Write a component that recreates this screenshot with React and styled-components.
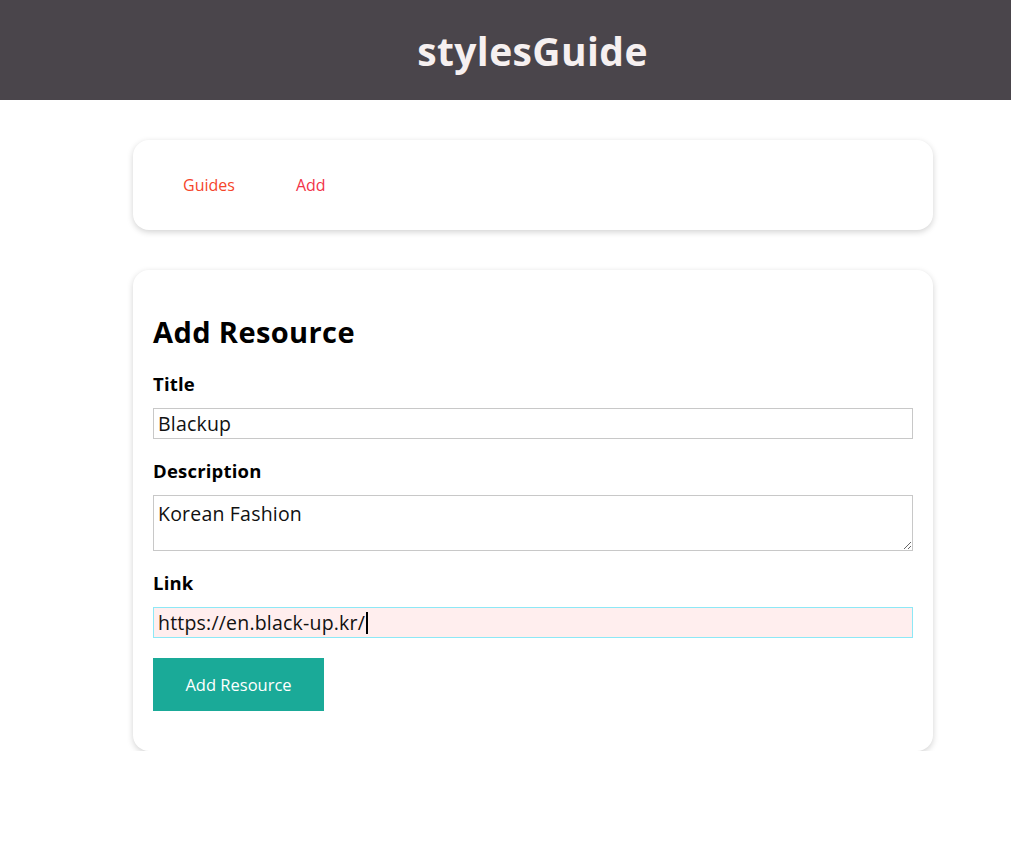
import styled, { createGlobalStyle } from 'styled-components';

const GlobalStyle = createGlobalStyle`
  * {
    box-sizing: border-box;
  }
  body {
    margin: 0;
    font-family: 'Open Sans', 'Lato', sans-serif;
    background: #ffffff;
    color: #000000;
  }
`;

const linkValue = 'https://en.black-up.kr/';

const App = () => {
  return (
    <>
      <GlobalStyle />
      <Header>
        <Brand>stylesGuide</Brand>
      </Header>
      <Main>
        <NavCard>
          <NavLink href="#" $tone="#f5452a">Guides</NavLink>
          <NavLink href="#" $tone="#f2334a">Add</NavLink>
        </NavCard>
        <FormCard>
          <FormTitle>Add Resource</FormTitle>
          <Field>
            <Label>Title</Label>
            <TextInput defaultValue="Blackup" />
          </Field>
          <Field>
            <Label>Description</Label>
            <TextArea defaultValue="Korean Fashion" />
          </Field>
          <Field>
            <Label>Link</Label>
            <InputWrap>
              <TextInput defaultValue={linkValue} $active />
              <CaretLayer aria-hidden="true">
                <Ghost>{linkValue}</Ghost>
                <Caret />
              </CaretLayer>
            </InputWrap>
          </Field>
          <SubmitButton type="button">Add Resource</SubmitButton>
        </FormCard>
      </Main>
    </>
  );
};

const Header = styled.header`
  height: 100px;
  background-color: #4a454b;
  display: flex;
  align-items: center;
  justify-content: center;
`;

const Brand = styled.h1`
  margin: 0 0 0 54px;
  font-size: 39px;
  font-weight: 700;
  color: #f6f0f0;
  letter-spacing: 0.4px;
`;

const Main = styled.main`
  width: 800px;
  margin-left: 133px;
  padding-top: 40px;
  display: flex;
  flex-direction: column;
  gap: 40px;
`;

const Card = styled.section`
  background: #ffffff;
  border-radius: 16px;
  box-shadow: 0 2px 6px rgba(0, 0, 0, 0.18);
`;

const NavCard = styled(Card)`
  height: 90px;
  display: flex;
  align-items: center;
  padding: 0 50px;
  gap: 61px;
`;

const NavLink = styled.a`
  color: ${(p) => p.$tone};
  text-decoration: none;
  font-size: 16px;
`;

const FormCard = styled(Card)`
  padding: 44px 20px 40px;
  display: flex;
  flex-direction: column;
`;

const FormTitle = styled.h2`
  margin: 0 0 22px;
  font-size: 29px;
  font-weight: 700;
  line-height: 36px;
  letter-spacing: 0.4px;
`;

const Field = styled.div`
  display: flex;
  flex-direction: column;
  margin-bottom: 20px;
`;

const Label = styled.label`
  font-size: 18.5px;
  font-weight: 700;
  line-height: 24px;
  margin-bottom: 12px;
  letter-spacing: 0.2px;
`;

const InputWrap = styled.div`
  position: relative;
`;

const TextInput = styled.input`
  display: block;
  width: 760px;
  height: 31px;
  padding: 0 4px;
  font-family: inherit;
  font-size: 19.5px;
  letter-spacing: 0.2px;
  color: #111;
  outline: none;
  border: 1px solid ${(p) => (p.$active ? '#8de8f6' : '#c8c8c8')};
  background: ${(p) => (p.$active ? '#ffeeee' : '#ffffff')};
`;

const CaretLayer = styled.div`
  position: absolute;
  inset: 0;
  padding: 0 5px;
  display: flex;
  align-items: center;
  font-size: 19.5px;
  letter-spacing: 0.2px;
  pointer-events: none;
`;

const Ghost = styled.span`
  color: transparent;
  white-space: pre;
`;

const Caret = styled.span`
  width: 2px;
  height: 22px;
  margin-left: 1px;
  background: #000;
`;

const TextArea = styled.textarea`
  display: block;
  width: 760px;
  height: 56px;
  padding: 4px 4px;
  font-family: inherit;
  font-size: 19.5px;
  letter-spacing: 0.2px;
  color: #111;
  border: 1px solid #c8c8c8;
  outline: none;
  resize: vertical;
`;

const SubmitButton = styled.button`
  width: 171px;
  height: 53px;
  border: none;
  background: #1aaa98;
  color: #ffffff;
  font-family: inherit;
  font-size: 16.5px;
  cursor: pointer;
`;

export default App;
